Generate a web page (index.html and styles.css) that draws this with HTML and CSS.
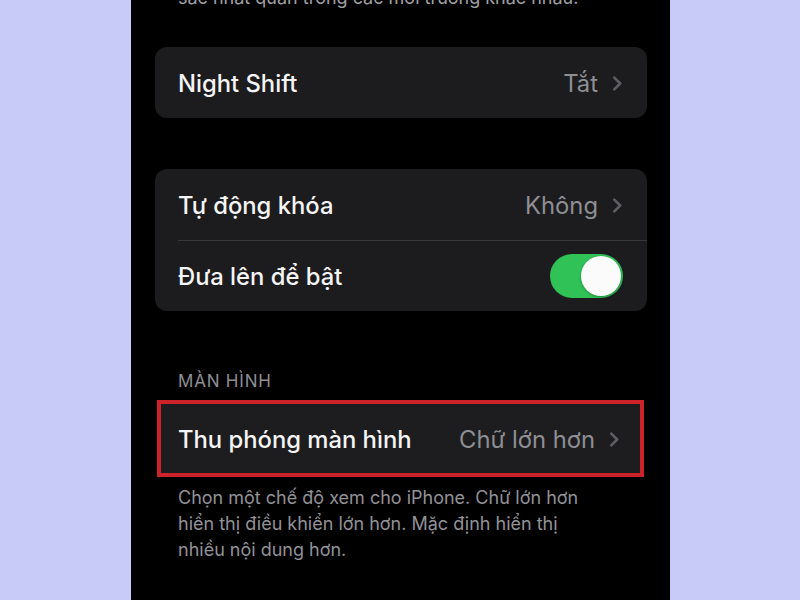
FILE: index.html
```html
<!DOCTYPE html>
<html lang="vi">
<head>
<meta charset="utf-8">
<link rel="stylesheet" href="styles.css">
</head>
<body>
<div class="stage">
  <div class="screen">
    <p class="note top-note">sắc nhất quán trong các môi trường khác nhau.</p>

    <div class="card card-first">
      <div class="row">
        <span class="label">Night Shift</span>
        <span class="value">Tắt</span>
        <svg class="chev" viewBox="0 0 10 14"><path d="M2 1.5 L7.5 7 L2 12.5"/></svg>
      </div>
    </div>

    <div class="card card-second">
      <div class="row">
        <span class="label">Tự động khóa</span>
        <span class="value">Không</span>
        <svg class="chev" viewBox="0 0 10 14"><path d="M2 1.5 L7.5 7 L2 12.5"/></svg>
      </div>
      <div class="row row-divided">
        <span class="label">Đưa lên để bật</span>
        <span class="toggle"><span class="knob"></span></span>
      </div>
    </div>

    <div class="section-title">MÀN HÌNH</div>

    <div class="card card-highlight">
      <div class="row row-hl">
        <span class="label">Thu phóng màn hình</span>
        <span class="value">Chữ lớn hơn</span>
        <svg class="chev" viewBox="0 0 10 14"><path d="M2 1.5 L7.5 7 L2 12.5"/></svg>
      </div>
    </div>

    <p class="note footer-note">Chọn một chế độ xem cho iPhone. Chữ lớn hơn hiển thị điều khiển lớn hơn. Mặc định hiển thị nhiều nội dung hơn.</p>
  </div>
</div>
</body>
</html>
```

FILE: styles.css
```css
html, body {
  margin: 0;
  padding: 0;
}
body {
  width: 800px;
  height: 600px;
  overflow: hidden;
  background: #c8cbf8;
  font-family: Inter, "Noto Sans", "DejaVu Sans", sans-serif;
}
.stage {
  display: flex;
  height: 600px;
}
.screen {
  margin-left: 131px;
  width: 539px;
  height: 600px;
  background: #000;
  overflow: hidden;
  display: flex;
  flex-direction: column;
}
.note {
  margin: 0;
  padding: 0 77px 0 47px;
  color: #929297;
  font-size: 18px;
  line-height: 26px;
}
.top-note {
  margin-top: -15px;
  padding-right: 30px;
  color: #a0a0a4;
}
.card {
  background: #1c1c1e;
  border-radius: 12px;
  margin: 0 23px 0 24px;
}
.card-first {
  margin-top: 36px;
}
.card-second {
  margin-top: 51px;
}
.row {
  height: 71px;
  display: flex;
  align-items: center;
  padding: 1px 24px 0 23px;
  box-sizing: border-box;
  position: relative;
}
.row-divided::before {
  content: "";
  position: absolute;
  left: 23px;
  right: 0;
  top: 0;
  height: 1px;
  background: #38383a;
}
.label {
  color: #f4f4f4;
  font-size: 23.8px;
  font-weight: 500;
  flex: 1;
}
.value {
  color: #8e8e93;
  font-size: 23.8px;
  font-weight: 400;
  margin-right: 14px;
}
.chev {
  width: 11px;
  height: 15px;
  fill: none;
  stroke: #5e5e62;
  stroke-width: 2.4;
  stroke-linecap: round;
  stroke-linejoin: round;
}
.toggle {
  width: 73px;
  height: 44px;
  border-radius: 22px;
  background: #31c257;
  display: flex;
  align-items: center;
  justify-content: flex-end;
  padding: 2px;
  box-sizing: border-box;
}
.knob {
  width: 40px;
  height: 40px;
  border-radius: 50%;
  background: #fbfbfb;
  box-shadow: 0 1px 3px rgba(0,0,0,0.3);
}
.section-title {
  margin: 59px 0 0 47px;
  color: #8e8e93;
  font-size: 17px;
  line-height: 22px;
  letter-spacing: 0.8px;
}
.card-highlight {
  margin: 8px 26px 0 26px;
  border: 4px solid #cc2229;
  border-radius: 0;
  background: #1d1d20;
}
.row-hl {
  height: 69px;
  padding: 1px 20px 0 17px;
}
.footer-note {
  margin-top: 8px;
}
```
